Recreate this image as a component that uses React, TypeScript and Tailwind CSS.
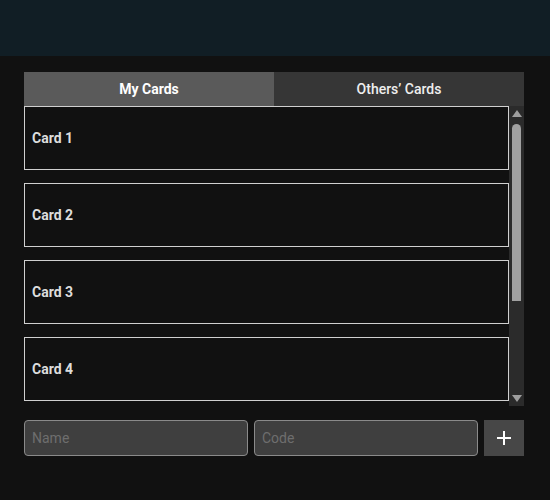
import React, { useState } from 'react';

const cards = ['Card 1', 'Card 2', 'Card 3', 'Card 4', 'Card 5', 'Card 6'];

// dark classic scrollbar, drawn by hand so headless overlay bars don't hide it
function ScrollTrack() {
  return (
    <div className="flex w-[15px] shrink-0 flex-col items-center bg-[#2b2b2b] py-[4px]">
      <svg width="10" height="7" viewBox="0 0 10 7" className="mb-[7px] shrink-0">
        <path d="M5 0L10 7H0z" fill="#9e9e9e" />
      </svg>
      <div className="h-[177px] w-[9px] shrink-0 rounded-t-full rounded-b-[2px] bg-[#a1a1a1]" />
      <div className="flex-1" />
      <svg width="10" height="7" viewBox="0 0 10 7" className="shrink-0">
        <path d="M0 0H10L5 7z" fill="#9e9e9e" />
      </svg>
    </div>
  );
}

export default function App() {
  const [tab, setTab] = useState<'mine' | 'others'>('mine');

  return (
    <div className="min-h-[500px] bg-[#111111] font-['Roboto',sans-serif]">
      <header className="h-14 bg-[#111e25]" />

      <main className="w-[500px] ml-6 pt-4">
        <div className="flex h-[34px]">
          <button
            onClick={() => setTab('mine')}
            className={`flex-1 text-sm ${tab === 'mine' ? 'bg-[#5a5a5a] font-bold text-white' : 'bg-[#363636] font-medium text-[#eeeeee]'}`}
          >
            My Cards
          </button>
          <button
            onClick={() => setTab('others')}
            className={`flex-1 text-sm ${tab === 'others' ? 'bg-[#5a5a5a] font-bold text-white' : 'bg-[#363636] font-medium text-[#eeeeee]'}`}
          >
            Others’ Cards
          </button>
        </div>

        <div className="flex h-[300px]">
          <div className="flex-1 overflow-y-auto [scrollbar-width:none]">
            {cards.map((c) => (
              <div
                key={c}
                className="mb-[13px] flex h-16 items-center border border-[#d0d0d0] px-[7px] text-sm font-bold text-[#dddddd]"
              >
                {c}
              </div>
            ))}
          </div>
          <ScrollTrack />
        </div>

        <form className="mt-[14px] flex gap-[6px]" onSubmit={(e) => e.preventDefault()}>
          <input
            placeholder="Name"
            className="h-9 min-w-0 flex-1 rounded-sm border border-[#8a8a8a] bg-[#3f3f3f] px-[7px] text-sm text-white outline-none placeholder:text-[#6e6e6e]"
          />
          <input
            placeholder="Code"
            className="h-9 min-w-0 flex-1 rounded-sm border border-[#8a8a8a] bg-[#3f3f3f] px-[7px] text-sm text-white outline-none placeholder:text-[#6e6e6e]"
          />
          <button type="submit" className="flex h-9 w-10 items-center justify-center bg-[#474747]">
            <svg width="14" height="14" viewBox="0 0 14 14" fill="none" stroke="white" strokeWidth="2">
              <path d="M7 0v14M0 7h14" />
            </svg>
          </button>
        </form>
      </main>
    </div>
  );
}
